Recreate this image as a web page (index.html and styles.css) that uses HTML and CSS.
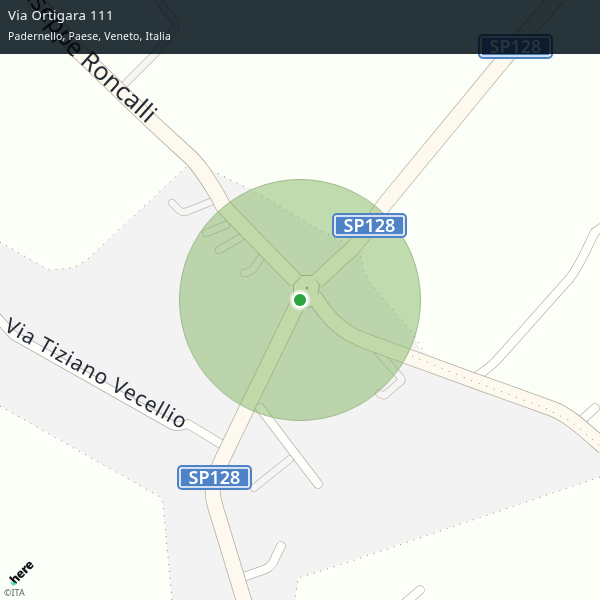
FILE: index.html
```html
<!DOCTYPE html>
<html lang="it">
<head>
<meta charset="utf-8">
<title>Via Ortigara 111</title>
<link rel="stylesheet" href="styles.css">
</head>
<body>
<main class="map">
<svg class="canvas" width="600" height="600" viewBox="0 0 600 600">
  <defs>
    <path id="d-main-e" d="M314 296C330 322 345 334 368 342L475 381L553 409C568 415 580 426 604 447"/>
    <path id="d-main-nw" d="M30 -8L75 48L152 122L190 157C200 166 208 180 218 196L223 206L296 281"/>
    <path id="d-main-ne" d="M558 -4L505 58L384 205C370 225 358 245 345 255L317 281"/>
    <path id="d-main-s" d="M298 303L246 410L222 460C215 474 212 484 213 495C214 505 218 515 221 525L245 604"/>
    <path id="d-tiziano" d="M-4 316L13 335L172 425C178 428 183 425 188 424L226 447"/>
    <path id="d-south-lane" d="M260 408L318 484"/>
    <path id="d-farm" d="M238 579L266 569C272 566 274 562 276 556L281 546"/>
    <path id="d-nub-s" d="M405 603L420 590"/>
    <path id="d-nub-e" d="M582 420L595 408"/>
    <path id="d-long" d="M476 377C484 371 488 369 496 361L570 278C582 262 588 245 595 232L604 226"/>
    <path id="d-top" d="M123 86L155 54L174 30C177 26 175 22 172 18L155 -4"/>
    <path id="d-a" d="M213 201L188 211C183 213 181 212 178 209L172 203"/>
    <path id="d-b" d="M226 225L206 233"/>
    <path id="d-c" d="M240 238L219 250"/>
    <path id="d-d" d="M262 256L254 268C250 272 248 273 244 273"/>
    <path id="d-e" d="M378 352L401 378C402 380 402 381 400 382L385 395C383 396 381 395 379 393"/>
    <path id="d-f" d="M290 459L254 488"/>
    <path id="label-roncalli" d="M-10 -48L62 45Q70 56 84 67L147 124"/>
    <path id="label-tiziano" d="M3 330L188 433"/>
  </defs>

  <rect class="land" width="600" height="600"/>
  <polygon class="urban" points="0,242 43,267 50,270 73,268 87,260 185,168 190,165 215,172 255,192 323,232 360,250 363,270 370,283 413,333 420,350 600,440 600,477 298,578 295,600 172,600 163,503 160,497 0,406"/>
  <polyline class="boundary" points="0,242 43,267 50,270 73,268 87,260 185,168 190,165 215,172 255,192 323,232 360,250 363,270 370,283 413,333 424,352"/>
  <polyline class="boundary" points="0,406 160,497 163,503 172,600"/>
  <polyline class="boundary" points="600,477 340,565 298,578 295,600"/>

  <g class="casing lane-case">
    <use href="#d-a"/><use href="#d-b"/><use href="#d-c"/><use href="#d-d"/><use href="#d-e"/><use href="#d-f"/><use href="#d-top"/>
  </g>
  <g class="fill lane-fill">
    <use href="#d-a"/><use href="#d-b"/><use href="#d-c"/><use href="#d-d"/><use href="#d-e"/><use href="#d-f"/><use href="#d-top"/>
  </g>
  <g class="casing minor-case">
    <use href="#d-tiziano"/><use href="#d-south-lane"/><use href="#d-farm"/><use href="#d-nub-s"/><use href="#d-nub-e"/><use href="#d-long"/>
  </g>
  <g class="fill minor-fill">
    <use href="#d-tiziano"/><use href="#d-south-lane"/><use href="#d-farm"/><use href="#d-nub-s"/><use href="#d-nub-e"/><use href="#d-long"/>
  </g>
  <g class="casing main-case">
    <use href="#d-main-e"/><use href="#d-main-nw"/><use href="#d-main-ne"/><use href="#d-main-s"/>
  </g>
  <polygon class="hub-case" points="293,285 293,296 298,310 312,307 319,292 320,285 313,275 302,275"/>
  <g class="fill main-fill">
    <use href="#d-main-e"/><use href="#d-main-nw"/><use href="#d-main-ne"/><use href="#d-main-s"/>
  </g>
  <polygon class="hub" points="294,285 294,296 298,309 312,306 318,292 319,285 313,276 302,276"/>
  <polyline class="road-dots" points="412,356 470,380 545,408 572,422 600,446"/>

  <text class="road-label"><textPath href="#label-roncalli" startOffset="100%" text-anchor="end">Giuseppe Roncalli</textPath></text>
  <text class="road-label road-label-small"><textPath href="#label-tiziano">Via Tiziano Vecellio</textPath></text>

  <circle class="accuracy" cx="300" cy="300" r="120.5"/>
  <circle class="hub-dot" cx="307" cy="288" r="1.2"/>

  <g transform="translate(478 34)">
    <rect class="shield" width="75" height="25" rx="5"/>
    <rect class="shield-line" x="3" y="3" width="69" height="19" rx="1.5"/>
    <text class="shield-text" x="37.5" y="18.5">SP128</text>
  </g>
  <g transform="translate(332 213)">
    <rect class="shield" width="75" height="25" rx="5"/>
    <rect class="shield-line" x="3" y="3" width="69" height="19" rx="1.5"/>
    <text class="shield-text" x="37.5" y="18.5">SP128</text>
  </g>
  <g transform="translate(177 465)">
    <rect class="shield" width="75" height="25" rx="5"/>
    <rect class="shield-line" x="3" y="3" width="69" height="19" rx="1.5"/>
    <text class="shield-text" x="37.5" y="18.5">SP128</text>
  </g>

  <circle class="pin-halo" cx="300" cy="300" r="10.5"/>
  <circle class="pin-ring" cx="300" cy="300" r="8.5"/>
  <circle class="pin" cx="300" cy="300" r="6"/>

  <text class="here-mark" transform="translate(15 585) rotate(-45)">here</text>
  <polygon class="here-tip" points="10,582 17,583 13,586"/>
  <text class="copyright" x="4" y="596">©ITA</text>
</svg>

<header class="address">
  <div class="address-street">Via Ortigara 111</div>
  <div class="address-area">Padernello, Paese, Veneto, Italia</div>
</header>
</main>
</body>
</html>
```
FILE: styles.css
```css
html, body {
  margin: 0;
  padding: 0;
  background: #fbfff7;
}

.map {
  position: relative;
  width: 600px;
  height: 600px;
  overflow: hidden;
  font-family: "Noto Sans", sans-serif;
}

.canvas {
  display: block;
}

.land { fill: #fbfff7; }
.urban { fill: #f4f3f3; }

.boundary {
  fill: none;
  stroke: #8a8a84;
  stroke-width: 1;
  stroke-dasharray: 1 6;
}

.casing, .fill {
  fill: none;
  stroke-linecap: round;
  stroke-linejoin: round;
}

.lane-case { stroke: #bdbbb6; stroke-width: 8; }
.lane-fill { stroke: #f6f5f4; stroke-width: 6.6; }
.minor-case { stroke: #b2b0aa; stroke-width: 9.5; }
.minor-fill { stroke: #fefefb; stroke-width: 8.1; }
.main-case { stroke: #b0aa9c; stroke-width: 16; stroke-linecap: butt; }
.main-fill { stroke: #fdf9ef; stroke-width: 14.6; stroke-linecap: butt; }

.hub-case { fill: #b0aa9c; }
.hub { fill: #fdf9ef; }

.road-dots {
  fill: none;
  stroke: #8f8b7c;
  stroke-width: 1;
  stroke-dasharray: 1 7;
}

.road-label {
  font-family: "Noto Sans", sans-serif;
  font-size: 25px;
  fill: #262b38;
}

.road-label-small {
  font-size: 21px;
  letter-spacing: 1px;
}

.accuracy {
  fill: rgba(120, 175, 85, 0.45);
  stroke: #9fbc8c;
  stroke-width: 1;
}

.hub-dot { fill: #7d9470; }

.shield { fill: #4f83c7; }

.shield-line {
  fill: #4f83c7;
  stroke: #ffffff;
  stroke-width: 1.6;
}

.shield-text {
  font-family: "Noto Sans", sans-serif;
  font-size: 18px;
  font-weight: 600;
  fill: #ffffff;
  text-anchor: middle;
}

.pin-halo { fill: rgba(255, 255, 255, 0.45); }
.pin-ring { fill: #ffffff; }
.pin { fill: #2aa43c; }

.here-mark {
  font-family: "Noto Sans", sans-serif;
  font-size: 12.5px;
  font-weight: 900;
  fill: #14181c;
  letter-spacing: -0.5px;
}

.here-tip { fill: #48dbbd; }

.copyright {
  font-family: "Noto Sans", sans-serif;
  font-size: 9px;
  fill: #5d6266;
}

.address {
  position: absolute;
  top: 0;
  left: 0;
  right: 0;
  height: 54px;
  box-sizing: border-box;
  padding: 6px 8px 0;
  display: flex;
  flex-direction: column;
  gap: 5px;
  color: #eef1f2;
}

.address::before {
  content: "";
  position: absolute;
  top: 0;
  right: 0;
  bottom: 0;
  left: 0;
  background: #27343b;
  mix-blend-mode: multiply;
}

.address-street {
  position: relative;
  font-size: 13.3px;
  line-height: 18px;
  letter-spacing: 0.3px;
}

.address-area {
  position: relative;
  font-size: 10.4px;
  line-height: 14px;
  letter-spacing: 0.2px;
}
```
